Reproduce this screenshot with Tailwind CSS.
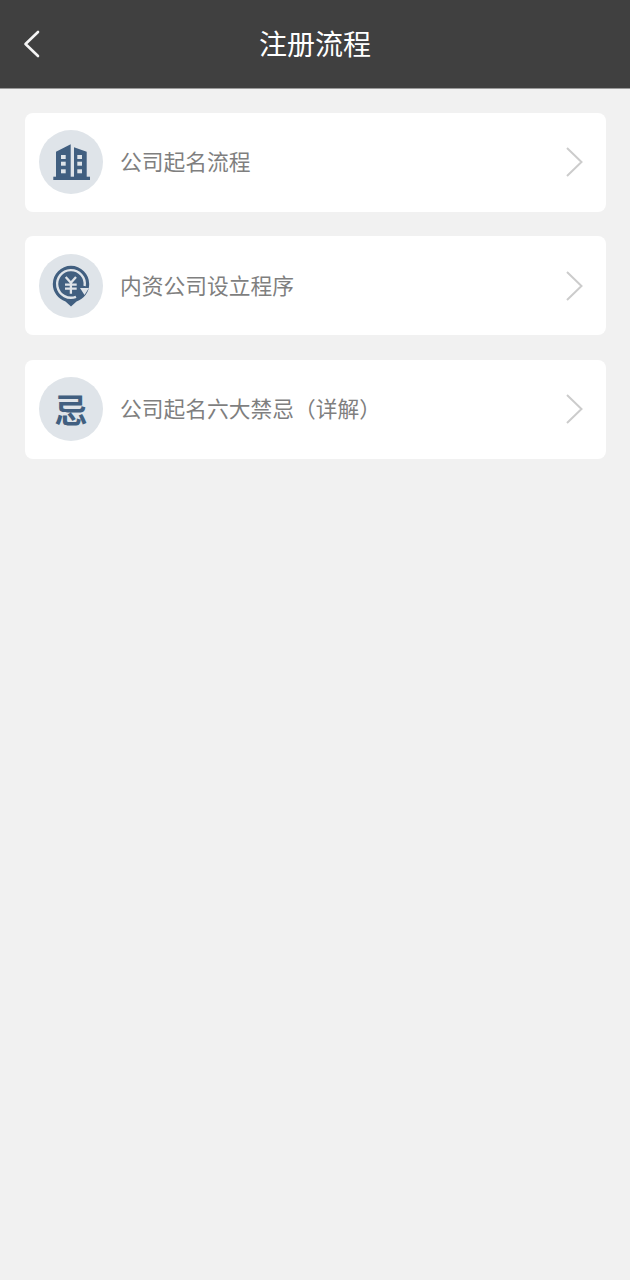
<!DOCTYPE html>
<html lang="zh-CN">
<head>
  <meta charset="UTF-8" />
  <title>注册流程</title>
  <script src="https://cdn.jsdelivr.net/npm/@tailwindcss/browser@4"></script>
</head>
<body class="bg-[#f1f1f1] h-[1280px] overflow-hidden font-['Noto_Sans_CJK_SC','Noto_Sans',sans-serif]">
  <!-- HEADER -->
  <header class="relative h-[89px] bg-[#404040] border-b border-[#9a9a9a] flex items-center justify-center">
    <svg class="absolute left-[22px] top-[30px]" width="18" height="28" viewBox="0 0 18 28" fill="none" stroke="#f5f5f5" stroke-width="2.6" stroke-linecap="round" stroke-linejoin="round">
      <path d="M16 2 L3.5 14 L16 26"/>
    </svg>
    <h1 class="text-[28px] leading-[36px] text-white mb-[2px]">注册流程</h1>
  </header>

  <!-- LIST -->
  <main class="pl-[24.5px] pt-[23.5px] flex flex-col gap-[24.5px]">
    <div class="w-[581.5px] h-[99px] bg-white rounded-lg flex items-center pl-[14.5px] pr-[23px]">
      <div class="w-[64px] h-[64px] rounded-full bg-[#dfe4e9] flex items-center justify-center shrink-0">
        <svg width="38" height="38" viewBox="0 0 38 38">
          <path fill="#415f80" d="M4 34 V8.7 L18.7 1.3 V34 Z M22 4.3 L34.7 8.7 V34 H22 Z"/>
          <rect x="1.3" y="33.7" width="36.7" height="3.3" fill="#415f80"/>
          <g fill="#dfe4e9">
            <rect x="9" y="12" width="4.7" height="4"/><rect x="9" y="18.7" width="4.7" height="4"/><rect x="9" y="26.3" width="4.7" height="4"/>
            <rect x="25.3" y="12" width="4.7" height="4"/><rect x="25.3" y="18.7" width="4.7" height="4"/><rect x="25.3" y="26.3" width="4.7" height="4"/>
          </g>
        </svg>
      </div>
      <span class="ml-[17px] mb-[2px] text-[21.75px] leading-none text-[#7f7f7f]">公司起名流程</span>
      <svg class="ml-auto" width="17" height="30" viewBox="0 0 17 30" fill="none" stroke="#cccccc" stroke-width="2"><path d="M1 1 L15.5 15 L1 29"/></svg>
    </div>

    <div class="w-[581.5px] h-[99px] bg-white rounded-lg flex items-center pl-[14.5px] pr-[23px]">
      <div class="w-[64px] h-[64px] rounded-full bg-[#dfe4e9] flex items-center justify-center shrink-0">
        <svg width="38" height="42" viewBox="0 0 38 42">
          <path fill="#415f80" d="M19 0.8 A18.2 18.2 0 0 1 37.2 19 A18.2 18.2 0 0 1 24.5 36.4 L19 41.5 L13.5 36.4 A18.2 18.2 0 0 1 0.8 19 A18.2 18.2 0 0 1 19 0.8 Z"/>
          <path d="M24 31.8 A13.8 13.8 0 1 1 32.6 21" fill="none" stroke="#dfe4e9" stroke-width="2.4"/>
          <path d="M28 23 L37 23 L32.5 30 Z" fill="#dfe4e9"/>
          <path d="M13.7 12 L18.9 17.7 L24 12 M13 19.7 H24.7 M13 23.7 H24.7 M18.9 17.7 V28.7" fill="none" stroke="#dfe4e9" stroke-width="2.3"/>
        </svg>
      </div>
      <span class="ml-[17px] mb-[2px] text-[21.75px] leading-none text-[#7f7f7f]">内资公司设立程序</span>
      <svg class="ml-auto" width="17" height="30" viewBox="0 0 17 30" fill="none" stroke="#cccccc" stroke-width="2"><path d="M1 1 L15.5 15 L1 29"/></svg>
    </div>

    <div class="w-[581.5px] h-[99px] bg-white rounded-lg flex items-center pl-[14.5px] pr-[23px]">
      <div class="w-[64px] h-[64px] rounded-full bg-[#dfe4e9] flex items-center justify-center shrink-0">
        <span class="text-[33px] leading-none font-bold text-[#415f80]">忌</span>
      </div>
      <span class="ml-[17px] mb-[2px] text-[21.75px] leading-none text-[#7f7f7f]">公司起名六大禁忌（详解）</span>
      <svg class="ml-auto" width="17" height="30" viewBox="0 0 17 30" fill="none" stroke="#cccccc" stroke-width="2"><path d="M1 1 L15.5 15 L1 29"/></svg>
    </div>
  </main>
</body>
</html>
